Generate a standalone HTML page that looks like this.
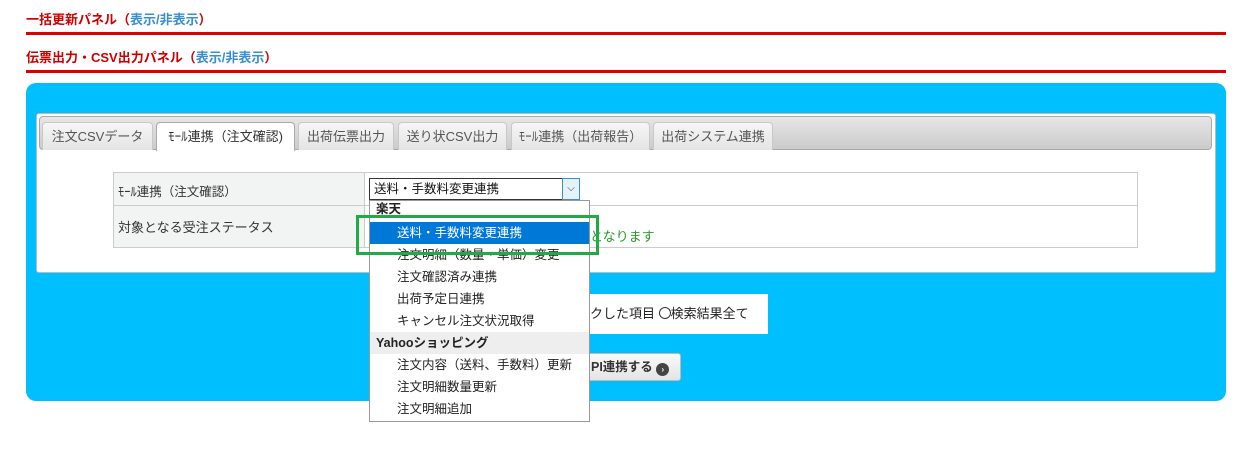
<!DOCTYPE html>
<html><head><meta charset="utf-8"><style>
*{box-sizing:border-box;margin:0;padding:0}
body{width:1260px;height:456px;background:#fff;font-family:"Liberation Sans","Noto Sans CJK JP",sans-serif;font-size:13px;color:#333;position:relative;overflow:hidden}
.abs{position:absolute}
.h{left:26px;font-weight:bold;color:#c00;font-size:13px}
.h span{color:#3a8fd0}
.line{left:26px;width:1200px;height:3px;background:#d00}
.tab{position:absolute;top:122px;height:28px;border:1px solid #c8c8c8;border-bottom:none;border-radius:4px 4px 0 0;background:linear-gradient(#f6f6f6,#e4e4e4);font-size:13px;color:#555;text-align:center;line-height:27px}
.dd div{height:22px;line-height:22px;padding-left:27px;font-size:12.5px;color:#222;white-space:nowrap}
</style></head><body>
<div class="abs h" style="top:9px">一括更新パネル（<span>表示/非表示</span>）</div>
<div class="abs line" style="top:32px"></div>
<div class="abs h" style="top:47px">伝票出力・CSV出力パネル（<span>表示/非表示</span>）</div>
<div class="abs line" style="top:70px"></div>

<div class="abs" style="left:26px;top:83px;width:1200px;height:318px;background:#00bfff;border-radius:10px"></div>
<div class="abs" style="left:36px;top:113px;width:1180px;height:160px;background:#fff;border:1px solid #bbb;border-radius:3px"></div>
<div class="abs" style="left:39px;top:116px;width:1173px;height:34px;background:linear-gradient(#e6e6e6,#cbcbcb);border:1px solid #aaa;border-radius:4px"></div>
<div class="tab" style="left:42px;width:111px">注文CSVデータ</div>
<div class="tab" style="left:156px;width:139px;background:#fff;height:29px;color:#333;border-color:#aaa">ﾓｰﾙ連携（注文確認)</div>
<div class="tab" style="left:298px;width:96px">出荷伝票出力</div>
<div class="tab" style="left:398px;width:109px">送り状CSV出力</div>
<div class="tab" style="left:511px;width:139px">ﾓｰﾙ連携（出荷報告）</div>
<div class="tab" style="left:653px;width:120px">出荷システム連携</div>

<div class="abs" style="left:113px;top:172px;width:1025px;height:76px;border:1px solid #ccc"></div>
<div class="abs" style="left:114px;top:173px;width:251px;height:74px;background:#f2f3f3;border-right:1px solid #ccc"></div>
<div class="abs" style="left:113px;top:205px;width:1025px;height:1px;background:#ccc"></div>
<div class="abs" style="left:118px;top:181px;font-size:12.5px">ﾓｰﾙ連携（注文確認）</div>
<div class="abs" style="left:118px;top:217px;font-size:13px">対象となる受注ステータス</div>
<div class="abs" style="left:590px;top:226px;color:#2a9a2a;font-size:13px">となります</div>

<div class="abs" style="left:369px;top:178px;width:210px;height:22px;border:1px solid #333;background:#fff;font-size:12.5px;line-height:20px;padding-left:4px;color:#111">送料・手数料変更連携</div>
<div class="abs" style="left:562px;top:178px;width:18px;height:22px;border:1px solid #3a8fd0;background:#e5f1fb;font-size:10px;text-align:center;line-height:20px;color:#333">⌵</div>

<div class="abs" style="left:590px;top:294px;width:178px;height:40px;background:#fff;font-size:13px;line-height:40px;color:#222;white-space:nowrap">クした項目 <span style="display:inline-block;width:12px;height:12px;border:1px solid #333;border-radius:50%;vertical-align:-1px"></span>検索結果全て</div>
<div class="abs" style="left:580px;top:353px;width:101px;height:28px;background:linear-gradient(#fafafa,#e4e4e4);border:1px solid #bbb;border-radius:3px;font-weight:bold;font-size:12.5px;line-height:26px;padding-left:10px;color:#333">PI連携する <span style="display:inline-block;width:13px;height:13px;border-radius:50%;background:#444;color:#fff;font-size:8px;line-height:13px;text-align:center;vertical-align:-1px">›</span></div>

<div class="abs dd" style="left:369px;top:200px;width:221px;height:222px;background:#fff;border:1px solid #999">
<div style="padding-left:6px;font-weight:bold;height:21px;line-height:17px">楽天</div>
<div style="background:#0078d7;color:#fff">送料・手数料変更連携</div>
<div>注文明細（数量・単価）変更</div>
<div>注文確認済み連携</div>
<div>出荷予定日連携</div>
<div>キャンセル注文状況取得</div>
<div style="padding-left:6px;font-weight:bold;background:#eee">Yahooショッピング</div>
<div>注文内容（送料、手数料）更新</div>
<div>注文明細数量更新</div>
<div>注文明細追加</div>
</div>
<div class="abs" style="left:356px;top:215px;width:243px;height:40px;border:3px solid #22aa44"></div>
</body></html>
